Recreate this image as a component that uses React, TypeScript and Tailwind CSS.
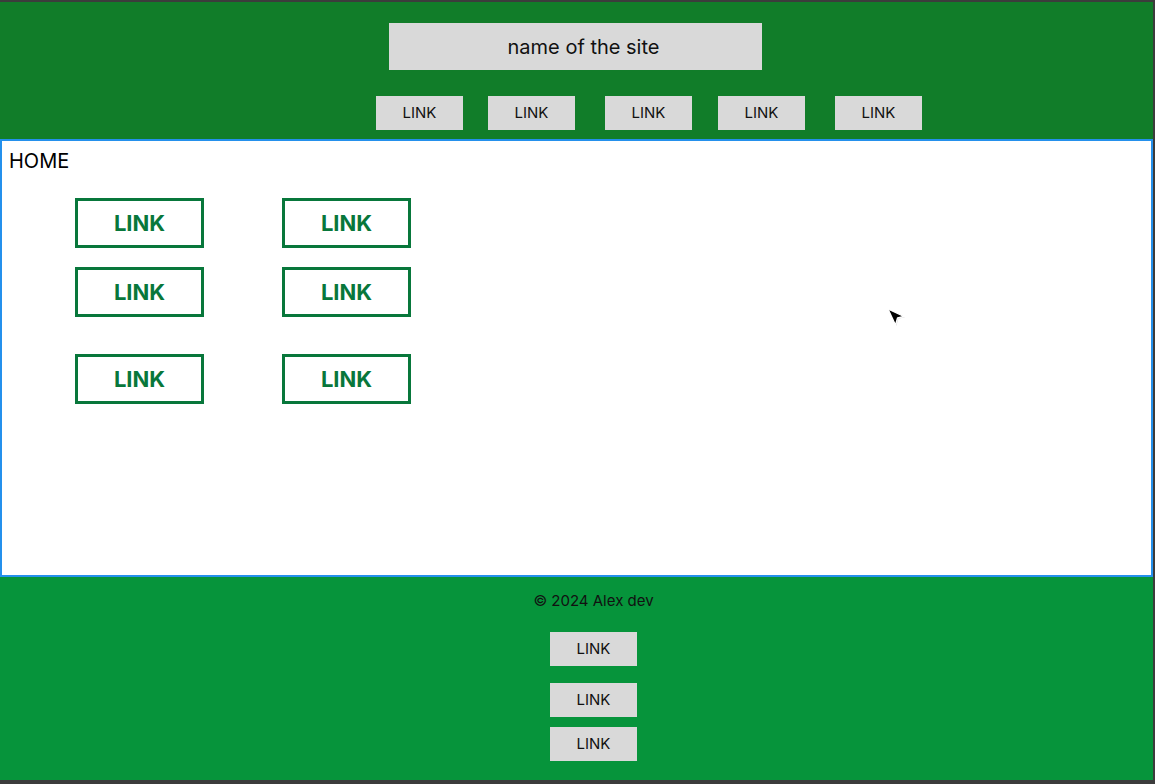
import React from "react";

/* ================= DATA ================= */
const navLinks = [
  { id: 1, gap: "ml-0" },
  { id: 2, gap: "ml-[25px]" },
  { id: 3, gap: "ml-[30px]" },
  { id: 4, gap: "ml-[26px]" },
  { id: 5, gap: "ml-[30px]" },
];

const rows = [
  { id: 1, mt: "mt-0" },
  { id: 2, mt: "mt-[19px]" },
  { id: 3, mt: "mt-[37px]" },
];

const footerLinks = [
  { id: 1, mt: "mt-[21px]" },
  { id: 2, mt: "mt-[17px]" },
  { id: 3, mt: "mt-[10px]" },
];

function GreyLink({ className = "" }: { className?: string }) {
  return (
    <a
      href="#"
      className={`flex h-[34px] w-[87px] items-center justify-center bg-[#d9d9d9] text-[15px] text-[#111] ${className}`}
    >
      LINK
    </a>
  );
}

function GreenLink() {
  return (
    <a
      href="#"
      className="flex h-[50px] w-[129px] items-center justify-center border-[3px] border-[#08773b] text-[22px] font-bold text-[#08773b]"
    >
      LINK
    </a>
  );
}

/* ================= COMPONENT ================= */
export default function App() {
  return (
    <div
      className="relative h-[784px] w-[1155px] bg-[#3c3c3c] pt-[2px]"
      style={{ fontFamily: "Inter, 'Noto Sans', sans-serif" }}
    >
      <div className="flex h-[778px] w-[1153px] flex-col">
        {/* HEADER */}
        <header className="h-[137px] bg-[#117d29] pt-[21px]">
          <div className="ml-[389px] flex h-[47px] w-[373px] items-center justify-center bg-[#d9d9d9] pl-[16px] text-[20px] text-[#111]">
            name of the site
          </div>
          <nav className="mt-[26px] flex pl-[376px]">
            {navLinks.map((l) => (
              <GreyLink key={l.id} className={l.gap} />
            ))}
          </nav>
        </header>

        {/* MAIN */}
        <main className="h-[438px] border-2 border-[#2490ec] bg-white">
          <h1 className="pl-[7px] pt-[8px] text-[20px] leading-[24px] text-black">
            HOME
          </h1>
          <div className="mt-[25px] flex flex-col pl-[73px]">
            {rows.map((r) => (
              <div key={r.id} className={`flex gap-x-[78px] ${r.mt}`}>
                <GreenLink />
                <GreenLink />
              </div>
            ))}
          </div>
        </main>

        {/* FOOTER */}
        <footer className="flex flex-1 flex-col items-center bg-[#06943b] pl-[34px] pt-[14px]">
          <p className="text-[15px] leading-[20px] text-[#111]">© 2024 Alex dev</p>
          {footerLinks.map((l) => (
            <GreyLink key={l.id} className={l.mt} />
          ))}
        </footer>
      </div>

      {/* cursor */}
      <svg
        className="absolute left-[884px] top-[305px]"
        width="26"
        height="26"
        viewBox="0 0 26 26"
      >
        <path
          d="M4 4 L20 11.5 L13.5 13 L11.5 20 Z"
          fill="#999"
          opacity="0.5"
          transform="translate(0.8 0.8)"
        />
        <path
          d="M4 4 L20 11.5 L13.5 13 L11.5 20 Z"
          fill="#000"
          stroke="#fff"
          strokeWidth="1.3"
          strokeLinejoin="round"
        />
      </svg>
    </div>
  );
}
